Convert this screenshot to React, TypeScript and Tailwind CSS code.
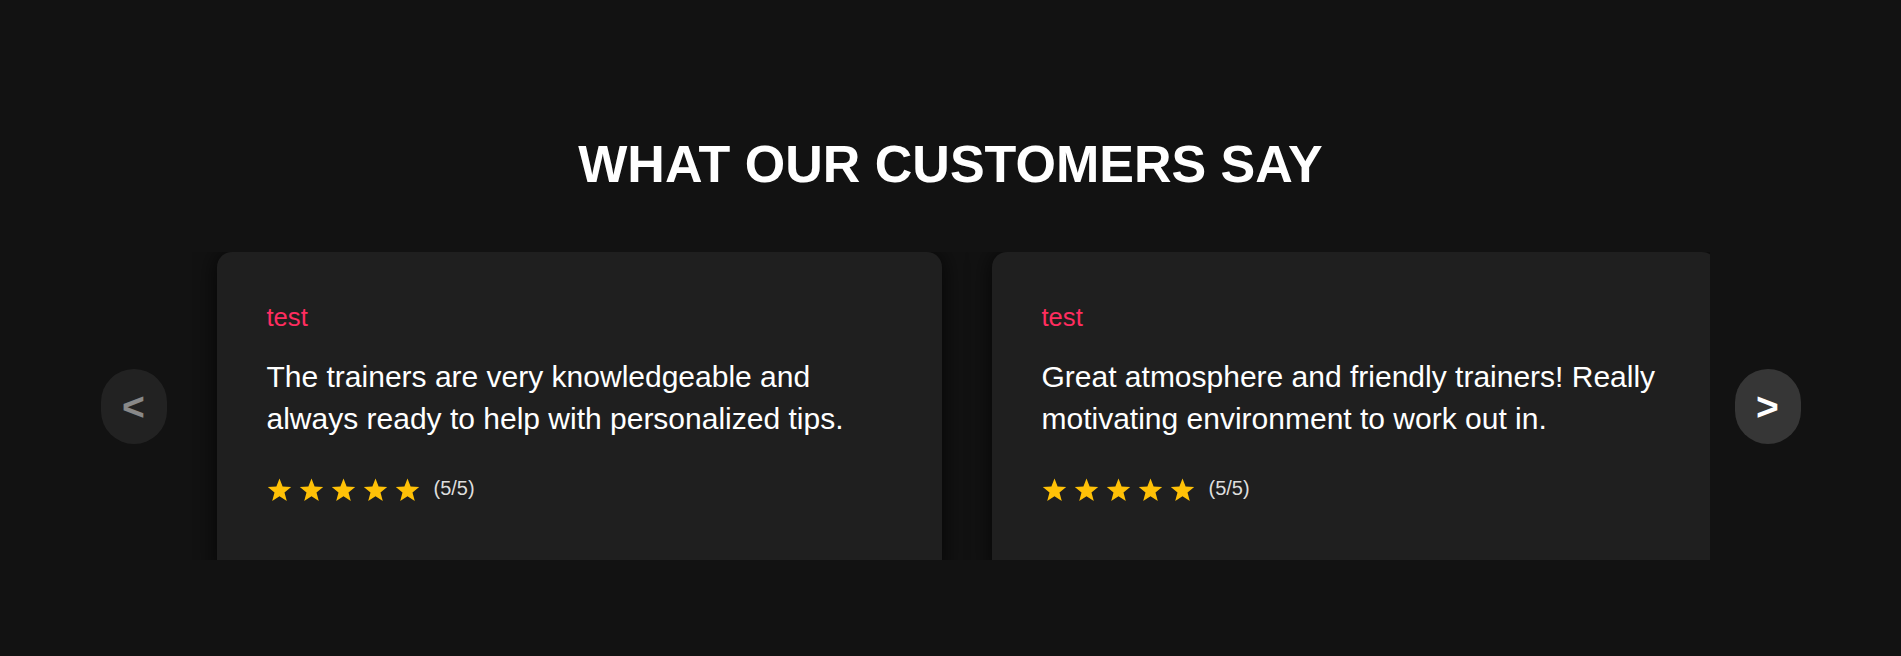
import React from "react";

type Review = {
  name: string;
  text: string;
  rating: number;
};

const reviews: Review[] = [
  {
    name: "test",
    text: "The trainers are very knowledgeable and always ready to help with personalized tips.",
    rating: 5,
  },
  {
    name: "test",
    text: "Great atmosphere and friendly trainers! Really motivating environment to work out in.",
    rating: 5,
  },
];

function Star() {
  return (
    <svg width="25" height="24" viewBox="0 0 25 24" className="shrink-0">
      <polygon
        points="12.5,0.5 15.6,8.6 24.2,9 17.5,14.5 19.8,23 12.5,18.2 5.2,23 7.5,14.5 0.8,9 9.4,8.6"
        fill="#ffc107"
      />
    </svg>
  );
}

function ReviewCard({ review }: { review: Review }) {
  return (
    <div className="w-[725px] h-[330px] shrink-0 mx-[25px] rounded-[15px] bg-[#1f1f1f] shadow-[0_0_25px_rgba(0,0,0,0.75)] px-[50px] pt-[50px]">
      <p className="text-[25.6px] leading-[1.2] text-[#ff2d5f]">{review.name}</p>
      <p className="mt-[23px] text-[30px] leading-[42px] text-white">{review.text}</p>
      <div className="mt-[37px] flex items-center">
        <div className="flex gap-[7px]">
          {Array.from({ length: review.rating }).map((_, i) => (
            <Star key={i} />
          ))}
        </div>
        <span className="ml-[14px] -mt-[4px] text-[20px] text-[#dddddd]">
          ({review.rating}/5)
        </span>
      </div>
    </div>
  );
}

export default function App() {
  return (
    <div className="min-h-screen w-full bg-[#121212] font-['Liberation_Sans',Arial,sans-serif] pt-[134px]">
      <h2 className="text-center text-[52px] leading-[61px] font-bold uppercase text-white">
        What Our Customers Say
      </h2>

      <div className="mt-[57px] w-[1700px] mx-auto flex items-center">
        <button className="w-[66px] h-[75px] shrink-0 rounded-full bg-[#333333] opacity-50 flex items-center justify-center text-[39px] font-bold text-white leading-none">
          &lt;
        </button>

        <div className="flex-1 mx-[25px] h-[308px] overflow-hidden">
          <div className="flex">
            {reviews.map((r, i) => (
              <ReviewCard key={i} review={r} />
            ))}
          </div>
        </div>

        <button className="w-[66px] h-[75px] shrink-0 rounded-full bg-[#363636] flex items-center justify-center text-[39px] font-bold text-white leading-none">
          &gt;
        </button>
      </div>
    </div>
  );
}
